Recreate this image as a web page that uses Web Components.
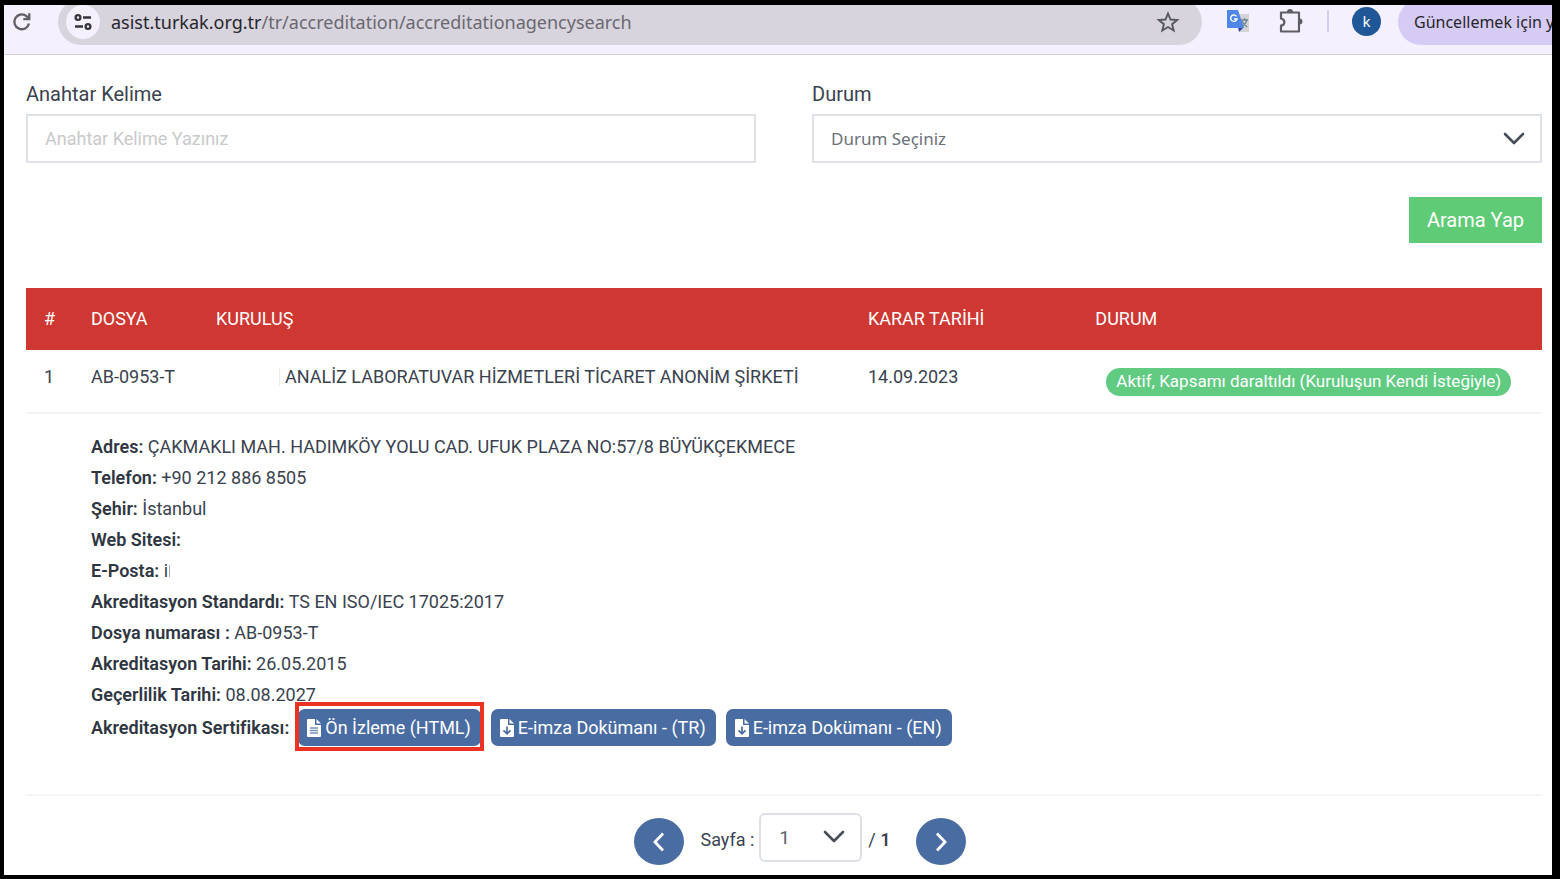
<!DOCTYPE html>
<html lang="tr">
<head>
<meta charset="utf-8">
<meta name="viewport" content="width=device-width, initial-scale=1">
<title>Akreditasyon Arama</title>
<style>
body { margin: 0; background: #000; color: #3a424f; font: 18px/31px Roboto, "Liberation Sans", sans-serif; }
</style>
</head>
<body>
<app-window>
  <browser-toolbar slot="toolbar"></browser-toolbar>
  <search-form></search-form>
  <result-table></result-table>
  <page-nav></page-nav>
</app-window>
<script>
const define = (name, html) => customElements.define(name, class extends HTMLElement {
  constructor() {
    super();
    const t = document.createElement('template');
    t.innerHTML = html;
    this.attachShadow({ mode: 'open' }).append(t.content.cloneNode(true));
  }
});

define('app-window', `
<style>
:host { display: flex; flex-direction: column; box-sizing: border-box; min-height: 100vh; padding: 5px 8px 4px 4px; background: #000; }
.page { flex: 1; background: #fff; padding: 23px 10px 8px 22px; }
</style>
<slot name="toolbar"></slot><main class="page"><slot></slot></main>`);

define('browser-toolbar', `
<style>
:host { display: flex; align-items: flex-start; box-sizing: border-box; height: 50px; overflow: hidden; background: #f4f0fd; border-bottom: 1px solid #d3d0df; font: 18px/24px "Noto Sans", "Open Sans", sans-serif; color: #26262b; }
button { border: 0; padding: 0; background: none; color: inherit; font: inherit; display: block; }
svg { display: block; }
.reload { margin: 7px 0 0 8px; width: 20px; }
.bar { flex: 1; display: flex; align-items: center; box-sizing: border-box; height: 46px; margin: -6px 0 0 26px; padding: 0 22px 0 8px; border-radius: 23px; background: #d8d4de; }
.site { display: grid; place-items: center; width: 34px; height: 34px; border-radius: 17px; background: #f4f0fd; }
.url { flex: 1; min-width: 0; margin-left: 11px; font-size: 18px; white-space: nowrap; }
.url span { color: #6a6870; }
.tools { display: flex; align-items: center; height: 32px; }
.translate { margin-left: 24px; }
.ext { margin-left: 29px; }
.sep { width: 2px; height: 22px; margin-left: 24px; background: #d9ccf7; }
.avatar { width: 29px; height: 29px; margin-left: 23px; border-radius: 50%; background: #205796; color: #fff; font-size: 15px; line-height: 29px; text-align: center; }
.update { box-sizing: border-box; width: 154px; height: 46px; margin: -6px 0 0 17px; padding-left: 16px; border-radius: 23px 0 0 23px; background: #d6cbf5; font-size: 16px; text-align: left; white-space: nowrap; }
</style>
<button class="reload" aria-label="Yenile"><svg width="20" height="20" viewBox="0 0 20 20" fill="none" stroke="#616066" stroke-width="2.3"><path d="M17 11.5A7.4 7.4 0 1 1 14.7 4.3L17 6.5M17.3 1.2v6h-6"/></svg></button>
<div class="bar">
  <button class="site" aria-label="Site bilgileri"><svg width="20" height="18" viewBox="0 0 20 18" fill="none" stroke="#35343a" stroke-width="2.3"><circle cx="5" cy="4.5" r="2.4"/><path d="M10 4.5h8M2 13.5h8"/><circle cx="15" cy="13.5" r="2.4"/></svg></button>
  <div class="url">asist.turkak.org.tr<span>/tr/accreditation/accreditationagencysearch</span></div>
  <button aria-label="Yer işareti"><svg width="24" height="22" viewBox="0 0 24 22" fill="none" stroke="#58575d" stroke-width="1.9"><path d="M12 2.5l2.5 6 6.7.5-5.1 4.2 1.6 6.3L12 16l-5.7 3.5 1.6-6.3L2.800 9l6.700-.5z"/></svg></button>
</div>
<div class="tools">
  <svg class="translate" width="24" height="24" viewBox="0 0 24 24"><path d="M9 5h14v18H14z" fill="#d5d4d4"/><path d="M12 18l6 0-5 5z" fill="#2b47a5"/><path d="M1 1h11l6 18H1z" fill="#4f86e9"/><path d="M10.500 7.300A3.200 3.200 0 1 0 11 10H8" fill="none" stroke="#fff" stroke-width="1.400"/><path d="M15 11h7M18.500 9v2M21 11c-1 3-3 5-4 6M16 12c1 3 3 4 5 6" fill="none" stroke="#6b8791" stroke-width="1.300"/></svg>
  <button class="ext" aria-label="Uzantılar"><svg width="24" height="26" viewBox="0 0 24 26"><path d="M2 4.500h18v19H2v-6c4 0 5-6 0-7z" fill="none" stroke="#5f5e65" stroke-width="2.200" stroke-linejoin="round"/><path d="M8 4a3 3 0 0 1 6 0M20.500 10.500a3 3 0 0 1 0 6" fill="#5f5e65"/></svg></button>
  <div class="sep"></div>
  <button class="avatar" aria-label="Profil">k</button>
</div>
<button class="update">Güncellemek için y</button>`);

define('search-form', `
<style>
:host { display: block; }
form { display: grid; grid-template-columns: 1fr 1fr; column-gap: 56px; }
label { display: block; line-height: 32px; font-size: 20px; margin-bottom: 4px; }
input, select { appearance: none; box-sizing: border-box; width: 100%; height: 49px; margin: 0; padding: 0 17px; border: 2px solid #dfe3e8; border-radius: 0; background: #fff; color: #6b7079; font: 17px "Noto Sans", "Open Sans", sans-serif; grid-area: 1 / 1; }
input { font: 18px Roboto, sans-serif; }
input::placeholder { color: #c9c9cb; opacity: 1; }
.pick { display: grid; align-items: center; }
.pick svg { grid-area: 1 / 1; justify-self: end; margin-right: 17px; pointer-events: none; }
button { grid-column: 2; justify-self: end; height: 46px; margin: 34px 0 45px; padding: 0 18px; border: 0; background: #5fcb76; color: #fff; font: 20px Roboto, sans-serif; }
</style>
<form>
  <div><label for="key">Anahtar Kelime</label><input id="key" type="text" placeholder="Anahtar Kelime Yazınız"></div>
  <div><label for="state">Durum</label><div class="pick"><select id="state"><option>Durum Seçiniz</option></select>
    <svg width="22" height="14" viewBox="0 0 22 14" fill="none" stroke="#484e57" stroke-width="2.600" stroke-linecap="round" stroke-linejoin="round"><path d="M2 2l9 9 9-9"/></svg></div></div>
  <button type="button">Arama Yap</button>
</form>`);

define('doc-button', `
<style>
:host { display: inline-block; position: relative; }
button { display: flex; align-items: center; gap: 4px; height: 37px; padding: 0 10px 0 9px; border: 0; border-radius: 7px; background: #496ca2; color: #fff; font: 18px Roboto, sans-serif; white-space: nowrap; }
svg { display: block; }
.down, :host([kind=download]) .lines { display: none; }
:host([kind=download]) .down { display: block; }
:host([marked])::after { content: ""; position: absolute; inset: -7px -3px -5px -3px; border: 4px solid #eb3223; pointer-events: none; }
</style>
<button><svg width="14" height="20" viewBox="0 0 14 20"><path d="M1 1h7v6h6v11a1 1 0 0 1-1 1H1a1 1 0 0 1-1-1V2a1 1 0 0 1 1-1zM9.500 1L14 5.500H9.500z" fill="#fff"/><path class="lines" d="M3 10h8M3 12.500h8M3 15h8" stroke="#7892ba" stroke-width="1.300"/><path class="down" d="M7 8.500v7M3.500 12.300L7 15.800l3.500-3.500" fill="none" stroke="#496ca2" stroke-width="1.700"/></svg><span><slot></slot></span></button>`);

define('result-table', `
<style>
:host { display: block; }
table { width: 100%; border-collapse: collapse; table-layout: fixed; }
.c1 { width: 3.1% } .c2 { width: 8.25% } .c3 { width: 43% } .c4 { width: 15% }
th { box-sizing: border-box; height: 62px; padding: 0 0 2px 18px; background: #cf3733; color: #fff; font-weight: 400; text-align: left; }
td { padding: 11px 0 0 18px; vertical-align: top; text-align: left; white-space: nowrap; }
.row td { height: 51px; border-bottom: 2px solid #f3f4f4; }
.hidden { display: inline-block; width: 63px; height: 18px; margin-right: 5px; border-right: 1px solid #ececee; vertical-align: -3px; }
.badge { display: inline-block; height: 28px; margin: 7px 0 0 11px; padding: 0 10px; border-radius: 14px; background: #61cb82; color: #fff; font-size: 17px; line-height: 27px; }
.info td { height: 382px; padding-top: 17px; border-bottom: 2px solid #f5f6f6; box-sizing: border-box; }
.info div { height: 31px; }
b { font-weight: 600; color: #2f3642; }
.info .docs { display: flex; align-items: center; height: 37px; margin-top: -1px; }
.docs doc-button { margin-right: 10px; }
.docs b { margin-right: 9px; }
.cut { display: inline-block; width: 1px; height: 12px; background: #a6a9af; margin-left: 1px; }
</style>
<table>
  <colgroup><col class="c1"><col class="c2"><col class="c3"><col class="c4"><col></colgroup>
  <thead><tr><th>#</th><th>DOSYA</th><th>KURULUŞ</th><th>KARAR TARİHİ</th><th>DURUM</th></tr></thead>
  <tbody>
    <tr class="row"><td>1</td><td>AB-0953-T</td><td><span class="hidden"></span>ANALİZ LABORATUVAR HİZMETLERİ TİCARET ANONİM ŞİRKETİ</td><td>14.09.2023</td><td><span class="badge">Aktif, Kapsamı daraltıldı (Kuruluşun Kendi İsteğiyle)</span></td></tr>
    <tr class="info"><td></td><td colspan="4">
      <div><b>Adres:</b> ÇAKMAKLI MAH. HADIMKÖY YOLU CAD. UFUK PLAZA NO:57/8 BÜYÜKÇEKMECE</div>
      <div><b>Telefon:</b> +90 212 886 8505</div>
      <div><b>Şehir:</b> İstanbul</div>
      <div><b>Web Sitesi:</b></div>
      <div><b>E-Posta:</b> i<span class="cut"></span></div>
      <div><b>Akreditasyon Standardı:</b> TS EN ISO/IEC 17025:2017</div>
      <div><b>Dosya numarası :</b> AB-0953-T</div>
      <div><b>Akreditasyon Tarihi:</b> 26.05.2015</div>
      <div><b>Geçerlilik Tarihi:</b> 08.08.2027</div>
      <div class="docs"><b>Akreditasyon Sertifikası:</b><doc-button marked>Ön İzleme (HTML)</doc-button><doc-button kind="download">E-imza Dokümanı - (TR)</doc-button><doc-button kind="download">E-imza Dokümanı - (EN)</doc-button></div>
    </td></tr>
  </tbody>
</table>`);

define('page-nav', `
<style>
:host { display: block; padding-top: 13px; }
nav { display: flex; justify-content: center; align-items: center; padding-left: 32px; }
svg { display: block; }
.round { display: grid; place-items: center; width: 50px; height: 47px; margin-top: 9px; padding: 0; border: 0; border-radius: 50%; background: #496ca2; }
label { margin: 4px 5px 0 16px; }
.pick { display: grid; align-items: center; width: 103px; }
select { appearance: none; grid-area: 1 / 1; box-sizing: border-box; width: 100%; height: 49px; margin: 0; padding: 0 18px; border: 2px solid #dde1e6; border-radius: 6px; background: #fff; color: #5d636d; font: 19px Roboto, sans-serif; }
.pick svg { grid-area: 1 / 1; justify-self: end; margin-right: 17px; pointer-events: none; }
.total { margin: 4px 25px 0 6px; }
b { font-weight: 600; }
</style>
<nav aria-label="Sayfalama">
  <button class="round" aria-label="Önceki"><svg width="14" height="20" viewBox="0 0 14 20" fill="none" stroke="#fff" stroke-width="2.800"><path d="M11 1.500L3 10l8 8.500"/></svg></button>
  <label for="p">Sayfa :</label>
  <div class="pick"><select id="p"><option>1</option></select><svg width="22" height="14" viewBox="0 0 22 14" fill="none" stroke="#484e57" stroke-width="2.600" stroke-linecap="round" stroke-linejoin="round"><path d="M2 2l9 9 9-9"/></svg></div>
  <span class="total">/ <b>1</b></span>
  <button class="round" aria-label="Sonraki"><svg width="14" height="20" viewBox="0 0 14 20" fill="none" stroke="#fff" stroke-width="2.800"><path d="M3 1.500l8 8.500-8 8.500"/></svg></button>
</nav>`);
</script>
</body>
</html>
